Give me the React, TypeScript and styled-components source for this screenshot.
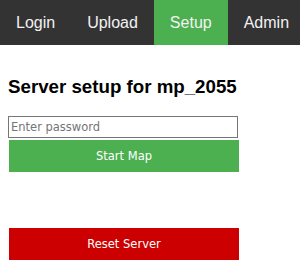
import React from "react";
import styled, { createGlobalStyle } from "styled-components";

const GlobalStyle = createGlobalStyle`
  html, body {
    margin: 0;
    padding: 0;
    background: #ffffff;
    font-family: "Liberation Sans", Arial, sans-serif;
  }
`;

const TopNav = styled.nav`
  display: flex;
  background: #333333;
  overflow: hidden;
`;

const NavLink = styled.a<{ $active?: boolean }>`
  display: block;
  padding: 14px 16px;
  font-size: 16px;
  line-height: 17px;
  color: #f2f2f2;
  text-decoration: none;
  background: ${(p) => (p.$active ? "#4caf50" : "transparent")};
  cursor: pointer;
`;

const Content = styled.main`
  padding: 12px 8px 0 8px;
`;

const Title = styled.h3`
  margin: 18.72px 0;
  font-size: 18.72px;
  font-weight: bold;
  color: #000000;
`;

const Form = styled.form`
  display: flex;
  flex-direction: column;
  align-items: flex-start;
`;

const PasswordInput = styled.input`
  box-sizing: border-box;
  width: 230px;
  height: 22px;
  margin: 0;
  padding: 1px 2px;
  border: 1px solid #767676;
  font-family: "DejaVu Sans", Verdana, sans-serif;
  font-size: 11.5px;
  color: #000000;
  outline: none;

  &::placeholder {
    color: #757575;
  }
`;

const ActionButton = styled.button<{ $color: string }>`
  box-sizing: border-box;
  width: 230px;
  height: 32px;
  margin: 2px 0 0 1px;
  padding: 0;
  border: none;
  background: ${(p) => p.$color};
  color: #ffffff;
  font-family: "DejaVu Sans", Verdana, sans-serif;
  font-size: 11.5px;
  cursor: pointer;
`;

const ResetRow = styled.div`
  padding-top: 54px;
`;

export default function App() {
  return (
    <>
      <GlobalStyle />
      <TopNav>
        <NavLink>Login</NavLink>
        <NavLink>Upload</NavLink>
        <NavLink $active>Setup</NavLink>
        <NavLink>Admin</NavLink>
      </TopNav>
      <Content>
        <Title>Server setup for mp_2055</Title>
        <Form onSubmit={(e) => e.preventDefault()}>
          <PasswordInput type="password" placeholder="Enter password" />
          <ActionButton type="submit" $color="#4caf50">
            Start Map
          </ActionButton>
        </Form>
        <ResetRow>
          <ActionButton type="button" $color="#cc0000">
            Reset Server
          </ActionButton>
        </ResetRow>
      </Content>
    </>
  );
}
